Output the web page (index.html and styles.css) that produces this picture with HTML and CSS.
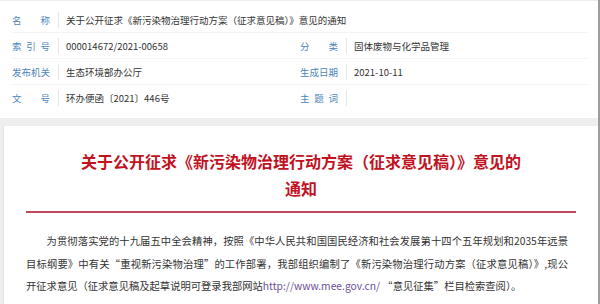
FILE: index.html
```html
<!DOCTYPE html>
<html lang="zh-CN">

<head>
    <meta charset="UTF-8">
    <meta name="viewport" content="width=device-width, initial-scale=1.0">
    <title>关于公开征求意见的通知</title>
    <link rel="stylesheet" href="styles.css">
</head>

<body>
    <div class="page">
        <div class="info">
            <div class="row">
                <div class="cell wide">
                    <span class="label">名<i></i>称</span>
                    <span class="value">关于公开征求《新污染物治理行动方案（征求意见稿）》意见的通知</span>
                </div>
            </div>
            <div class="row">
                <div class="cell">
                    <span class="label">索<i></i>引<i></i>号</span>
                    <span class="value">000014672/2021-00658</span>
                </div>
                <div class="cell">
                    <span class="label">分<i></i>类</span>
                    <span class="value">固体废物与化学品管理</span>
                </div>
            </div>
            <div class="row">
                <div class="cell">
                    <span class="label">发布机关</span>
                    <span class="value">生态环境部办公厅</span>
                </div>
                <div class="cell">
                    <span class="label">生成日期</span>
                    <span class="value">2021-10-11</span>
                </div>
            </div>
            <div class="row last">
                <div class="cell">
                    <span class="label">文<i></i>号</span>
                    <span class="value">环办便函〔2021〕446号</span>
                </div>
                <div class="cell">
                    <span class="label">主<i></i>题<i></i>词</span>
                    <span class="value"></span>
                </div>
            </div>
        </div>

        <div class="article">
            <h1 class="title">关于公开征求《新污染物治理行动方案（征求意见稿）》意见的<br>通知</h1>
            <div class="rule"></div>
            <p class="text">为贯彻落实党的十九届五中全会精神，按照《中华人民共和国国民经济和社会发展第十四个五年规划和2035年远景目标纲要》中有关“重视新污染物治理”的工作部署，我部组织编制了《新污染物治理行动方案（征求意见稿）》,现公开征求意见（征求意见稿及起草说明可登录我部网站<a href="#">http://www.mee.gov.cn/</a> “意见征集”栏目检索查阅）。</p>
        </div>
    </div>
</body>

</html>
```

FILE: styles.css
```css
body {
    margin: 0;
    background: #fff;
    font-family: "Noto Sans CJK SC", "Noto Sans", sans-serif;
    overflow: hidden;
}

.page {
    display: flex;
    flex-direction: column;
    width: 598px;
    height: 304px;
    overflow: hidden;
    border-right: 2px solid #9d9d9d;
    background: #eeeeee;
}

.info {
    background: #fff;
    border-top: 1px solid #ececec;
    padding: 6px 10px 7px 12px;
}

.row {
    display: flex;
    height: 26px;
    border-bottom: 1px solid #f4f4f4;
    box-sizing: border-box;
}

.row.last {
    border-bottom: none;
}

.cell {
    display: flex;
    align-items: center;
    width: 288px;
}

.cell.wide {
    width: auto;
}

.label {
    display: flex;
    justify-content: space-between;
    width: 38px;
    font-size: 9.5px;
    color: #4d86b8;
    padding-right: 8px;
    border-right: 1px solid #e6e6e6;
    line-height: 16px;
}

.label i {
    flex: 1;
}

.value {
    padding-left: 7px;
    font-size: 9.5px;
    color: #333;
    white-space: nowrap;
}

.article {
    flex: 1;
    margin: 8px 0 0 3px;
    background: #fff;
    border-left: 1px solid #e2e2e2;
    padding: 22px 22px 0 22px;
}

.title {
    margin: 0;
    text-align: center;
    font-size: 16px;
    line-height: 27px;
    font-weight: bold;
    color: #c1121f;
}

.rule {
    height: 2px;
    background: #c2495b;
    margin-top: 9px;
}

.text {
    margin: 17px 0 0 0;
    padding-right: 8px;
    font-size: 10.3px;
    line-height: 22.5px;
    color: #333;
    text-indent: 2em;
    text-align: justify;
}

.text a {
    color: #6b4f98;
    text-decoration: none;
}
```
